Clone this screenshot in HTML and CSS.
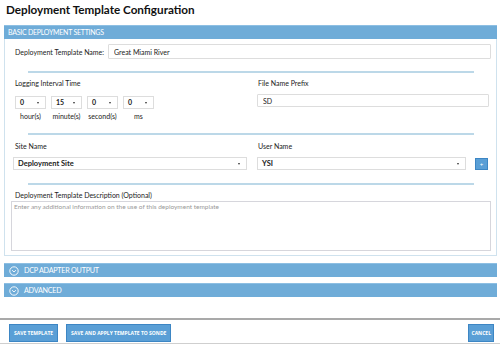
FILE: index.html
```html
<!DOCTYPE html>
<html lang="en">
<head>
    <meta charset="UTF-8">
    <title>Deployment Template Configuration</title>
    <link rel="stylesheet" href="styles.css">
</head>
<body>
    <h1 class="page-title">Deployment Template Configuration</h1>

    <div class="panel">
        <div class="panel-heading">BASIC DEPLOYMENT SETTINGS</div>
        <div class="panel-body">
            <div class="name-row">
                <label for="template-name">Deployment Template Name:</label>
                <input type="text" id="template-name" value="Great Miami River">
            </div>
            <hr class="divider">

            <div class="cols">
                <div class="col-left">
                    <div class="field-label">Logging Interval Time</div>
                    <div class="interval">
                        <div class="unit">
                            <div class="select-box small"><span>0</span></div>
                            <div class="unit-label">hour(s)</div>
                        </div>
                        <div class="unit">
                            <div class="select-box small"><span>15</span></div>
                            <div class="unit-label">minute(s)</div>
                        </div>
                        <div class="unit">
                            <div class="select-box small"><span>0</span></div>
                            <div class="unit-label">second(s)</div>
                        </div>
                        <div class="unit">
                            <div class="select-box small"><span>0</span></div>
                            <div class="unit-label">ms</div>
                        </div>
                    </div>
                </div>
                <div class="col-right">
                    <div class="field-label">File Name Prefix</div>
                    <input type="text" class="prefix-input" value="SD">
                </div>
            </div>
            <hr class="divider">

            <div class="cols">
                <div class="col-left">
                    <div class="field-label site-label">Site Name</div>
                    <div class="select-box wide site-select"><span>Deployment Site</span></div>
                </div>
                <div class="col-right">
                    <div class="field-label site-label">User Name</div>
                    <div class="user-row">
                        <div class="select-box wide user-select"><span>YSI</span></div>
                        <button class="add-btn">+</button>
                    </div>
                </div>
            </div>
            <hr class="divider divider-last">

            <div class="field-label desc-label">Deployment Template Description (Optional)</div>
            <textarea class="desc" placeholder="Enter any additional information on the use of this deployment template"></textarea>
        </div>
    </div>

    <div class="panel-heading collapsed first">
        <svg class="chev" width="10" height="10" viewBox="0 0 10 10"><circle cx="5" cy="5" r="4.2" fill="none" stroke="#fff" stroke-width="0.9"/><path d="M3.1 4.2 L5 6 L6.9 4.2" fill="none" stroke="#fff" stroke-width="0.9"/></svg>
        DCP ADAPTER OUTPUT
    </div>
    <div class="panel-heading collapsed">
        <svg class="chev" width="10" height="10" viewBox="0 0 10 10"><circle cx="5" cy="5" r="4.2" fill="none" stroke="#fff" stroke-width="0.9"/><path d="M3.1 4.2 L5 6 L6.9 4.2" fill="none" stroke="#fff" stroke-width="0.9"/></svg>
        ADVANCED
    </div>

    <div class="footer">
        <button class="btn">Save Template</button>
        <button class="btn">Save and Apply Template to Sonde</button>
        <button class="btn btn-right">Cancel</button>
    </div>
</body>
</html>
```

FILE: styles.css
```css
/* Basic styling */
body {
    font-family: Lato, "Open Sans", sans-serif;
    margin: 0;
    padding: 0;
    width: 500px;
    height: 344px;
    overflow: hidden;
    background-color: #fff;
    color: #222;
}
.page-title {
    margin: 0;
    padding: 1px 0 0 6px;
    height: 24px;
    font-size: 11.7px;
    line-height: 16px;
    font-weight: bold;
    color: #111;
}
/* Panels */
.panel {
    margin: 0 3px 0 4px;
}
.panel-heading {
    height: 13px;
    line-height: 13px;
    padding-left: 4px;
    background-color: #6facd8;
    border-top: 1px solid #8dbfe3;
    color: #fff;
    font-size: 7px;
    letter-spacing: -0.25px;
}
.panel-body {
    border: 1px solid #cfe2ee;
    border-top: none;
    padding: 5px 5px 4px 6px;
}
.name-row {
    display: flex;
    align-items: center;
    padding-left: 4px;
}
.name-row label {
    width: 93px;
    font-size: 7px;
}
input[type="text"] {
    font-family: inherit;
    box-sizing: border-box;
    border: 1px solid #ddd;
    border-radius: 1px;
    padding: 0 5px;
    font-size: 7px;
    color: #222;
    outline: none;
}
.name-row input {
    flex: 1;
    height: 15px;
}
.divider {
    border: none;
    height: 2px;
    background-color: #bcd8e8;
    margin: 12px 17px 0 17px;
}
.divider-last {
    margin-top: 13px;
}
.cols {
    display: grid;
    grid-template-columns: 246px 1fr;
}
.col-left {
    padding-left: 4px;
}
.field-label {
    font-size: 7px;
    line-height: 10px;
    margin-top: 5px;
}
.interval {
    display: flex;
    gap: 5px;
    margin-top: 8px;
}
.unit {
    width: 31px;
}
.select-box {
    position: relative;
    box-sizing: border-box;
    height: 13px;
    line-height: 11px;
    border: 1px solid #ddd;
    font-size: 7px;
    font-weight: bold;
    padding-left: 4px;
}
.select-box::after {
    content: "";
    position: absolute;
    right: 6px;
    top: 5px;
    border-left: 1.5px solid transparent;
    border-right: 1.5px solid transparent;
    border-top: 2px solid #333;
}
.unit-label {
    text-align: center;
    font-size: 7px;
    line-height: 10px;
    margin-top: 2px;
}
.col-right .field-label {
    padding-left: 1px;
}
.prefix-input {
    display: block;
    width: 232px;
    height: 13px;
    margin-top: 6px;
}
.site-label {
    margin-top: 6px;
}
.site-select {
    margin: 6px 0 0 -2px;
    width: 234px;
    font-size: 7.5px;
}
.user-row {
    display: flex;
    align-items: center;
    gap: 9px;
    margin-top: 6px;
}
.user-select {
    width: 209px;
    font-size: 7.5px;
}
.add-btn {
    width: 13px;
    height: 12px;
    padding: 0;
    border: 1px solid #3d86c4;
    background-color: #5a9fd6;
    color: #fff;
    font-size: 6px;
    line-height: 8px;
}
.desc-label {
    margin-top: 5px;
    padding-left: 4px;
}
.desc {
    display: block;
    box-sizing: border-box;
    width: 480px;
    height: 50px;
    margin-top: 1px;
    border: 1px solid #d6d6dc;
    resize: none;
    font-family: inherit;
    font-size: 6.5px;
    padding: 1px 2px;
}
.desc::placeholder {
    color: #999;
}
/* Collapsed sections */
.collapsed {
    margin: 7px 3px 0 4px;
    height: 13px;
    display: flex;
    align-items: center;
    gap: 5px;
    padding-left: 5px;
    font-size: 7.2px;
}
.collapsed + .collapsed {
    margin-top: 6px;
}
/* Footer */
.footer {
    margin-top: 21px;
    border-top: 2px solid #a9a9a9;
    border-bottom: 1px solid #cfcfcf;
    padding: 4px 6px 1px 9px;
    display: flex;
    gap: 8px;
}
.btn {
    height: 18px;
    padding: 0 4px;
    background-color: #5a9fd6;
    border: 1px solid #3d86c4;
    color: #fff;
    font-family: "Open Sans", sans-serif;
    font-weight: bold;
    font-size: 5px;
    text-transform: uppercase;
    cursor: pointer;
}
.btn-right {
    margin-left: auto;
    padding: 0 2px;
}
```
